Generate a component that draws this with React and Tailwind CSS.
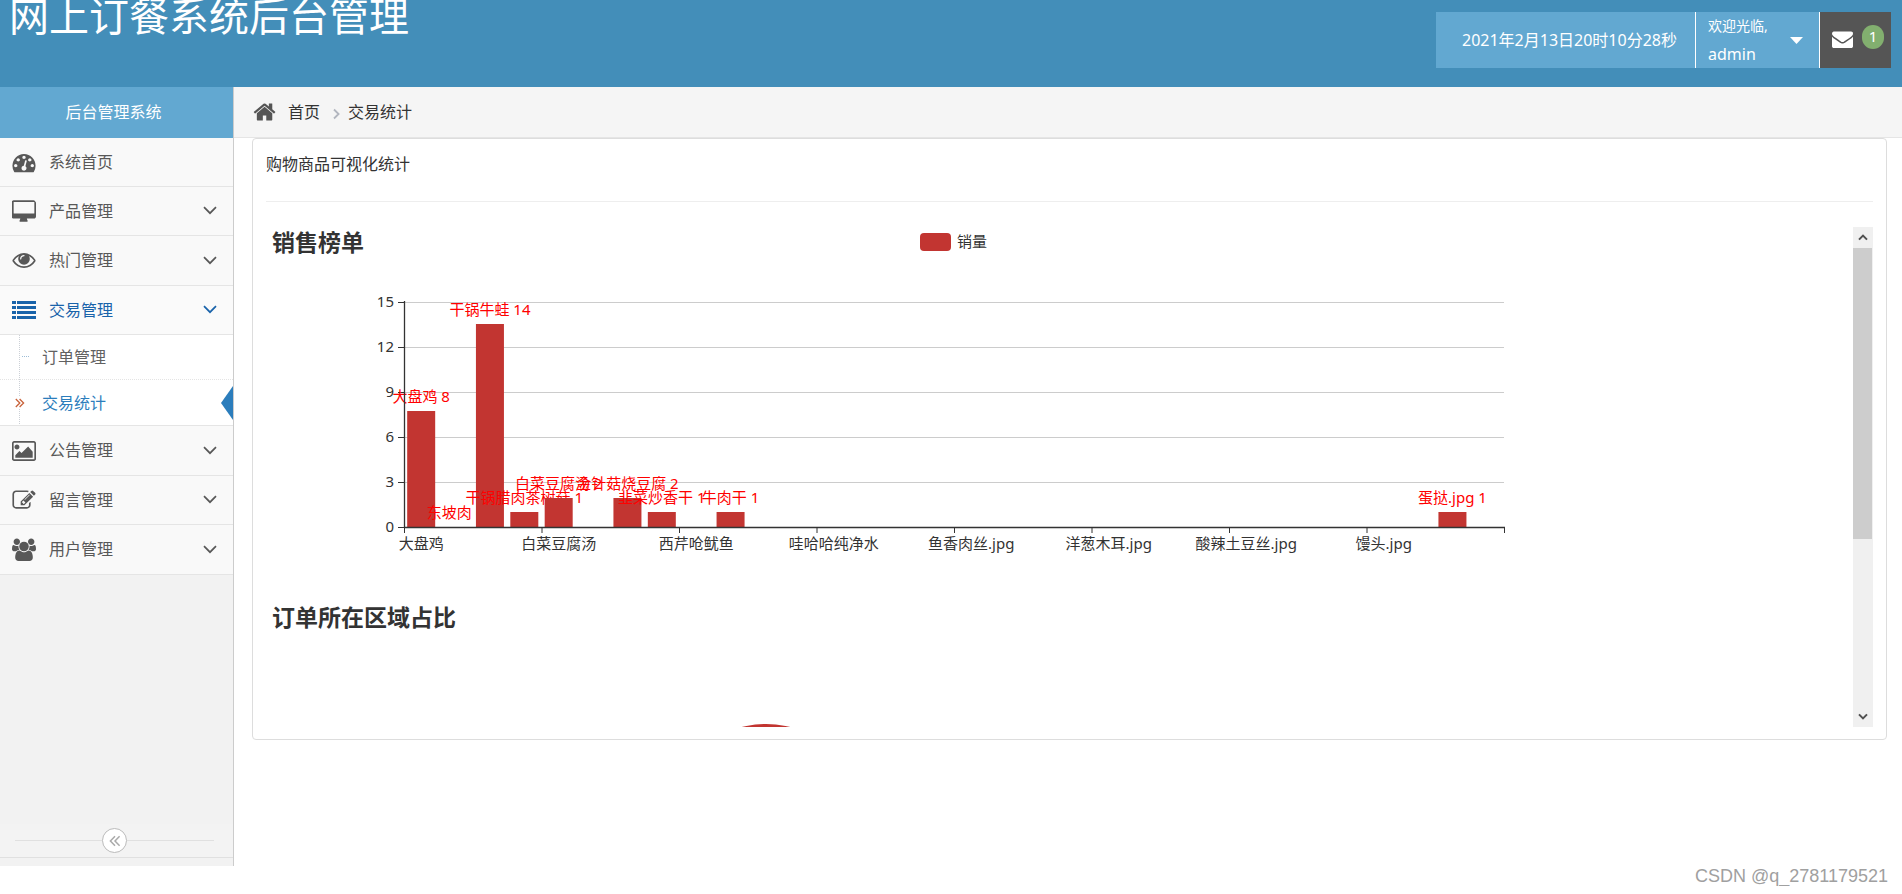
import { useState } from "react";

const ICONS = {
  dashboard: {
    box: "-32 -62 1856 1856",
    d: "M384 1152q0-53-37.5-90.5t-90.5-37.5-90.5 37.5-37.5 90.5 37.5 90.5 90.5 37.5 90.5-37.5 37.5-90.5zm192-448q0-53-37.5-90.5t-90.5-37.5-90.5 37.5-37.5 90.5 37.5 90.5 90.5 37.5 90.5-37.5 37.5-90.5zm428 481l101-382q6-26-7.5-48.5t-38.5-29.5-48 6.5-30 39.5l-101 382q-60 5-107 43.5t-63 98.5q-20 77 20 146t117 89 146-20 89-117q16-60-6-117t-72-91zm660-33q0-53-37.5-90.5t-90.5-37.5-90.5 37.5-37.5 90.5 37.5 90.5 90.5 37.5 90.5-37.5 37.5-90.5zm-640-640q0-53-37.5-90.5t-90.5-37.5-90.5 37.5-37.5 90.5 37.5 90.5 90.5 37.5 90.5-37.5 37.5-90.5zm448 192q0-53-37.5-90.5t-90.5-37.5-90.5 37.5-37.5 90.5 37.5 90.5 90.5 37.5 90.5-37.5 37.5-90.5zm320 448q0 261-141 483-19 29-54 29h-1402q-35 0-54-29-141-221-141-483 0-182 71-348t191-286 286-191 348-71 348 71 286 191 191 286 71 348z",
  },
  desktop: {
    box: "0 -100 1856 1856",
    d: "M1728 992v-832q0-13-9.5-22.5t-22.5-9.5h-1536q-13 0-22.5 9.5t-9.5 22.5v832q0 13 9.5 22.5t22.5 9.5h1536q13 0 22.5-9.5t9.5-22.5zm128-832v1088q0 66-47 113t-113 47h-544q0 37 16 77.5t32 71 16 43.5q0 26-19 45t-45 19h-512q-26 0-45-19t-19-45q0-14 16-44t32-70 16-78h-512q-66 0-113-47t-47-113v-1088q0-66 47-113t113-47h1536q66 0 113 47t47 113z",
  },
  eye: {
    box: "-32 -10 1856 1856",
    d: "M1664 960q-152-236-381-353 61 104 61 225 0 185-131.5 316.5t-316.5 131.5-316.5-131.5-131.5-316.5q0-121 61-225-229 117-381 353 133 205 333.5 326.5t434.5 121.5 434.5-121.5 333.5-326.5zm-720-384q0-20-14-34t-34-14q-125 0-214.5 89.5t-89.5 214.5q0 20 14 34t34 14 34-14 14-34q0-86 61-147t147-61q20 0 34-14t14-34zm848 384q0 34-20 69-140 230-376.5 368.5t-499.5 138.5-499.5-139-376.5-368q-20-35-20-69t20-69q140-229 376.5-368t499.5-139 499.5 139 376.5 368q20 35 20 69z",
  },
  list: {
    box: "0 0 24 24",
    d: "M0 3h4v3H0zM0 8h4v3H0zM0 13h4v3H0zM0 18h4v3H0zM5 3h19v3H5zM5 8h19v3H5zM5 13h19v3H5zM5 18h19v3H5z",
  },
  picture: {
    box: "0 -112 1856 1856",
    d: "M576 576q0 80-56 136t-136 56-136-56-56-136 56-136 136-56 136 56 56 136zm1024 384v448h-1344v-192l320-320 160 160 512-512zm96-704h-1536q-13 0-22.5 9.5t-9.5 22.5v1216q0 13 9.5 22.5t22.5 9.5h1536q13 0 22.5-9.5t9.5-22.5v-1216q0-13-9.5-22.5t-22.5-9.5zm160 32v1216q0 66-47 113t-113 47h-1536q-66 0-113-47t-47-113v-1216q0-66 47-113t113-47h1536q66 0 113 47t47 113z",
  },
  edit: {
    box: "-32 -60 1856 1856",
    d: "M888 1184l116-116-152-152-116 116v56h96v96h56zm440-720q-16-16-33 1l-350 350q-17 17-1 33t33-1l350-350q17-17 1-33zm80 594v190q0 119-84.5 203.5t-203.5 84.5h-832q-119 0-203.5-84.5t-84.5-203.5v-832q0-119 84.5-203.5t203.5-84.5h832q63 0 117 25 15 7 18 23 3 17-9 29l-49 49q-14 14-32 8-23-6-45-6h-832q-66 0-113 47t-47 113v832q0 66 47 113t113 47h832q66 0 113-47t47-113v-126q0-13 9-22l64-64q15-15 35-7t20 29zm-96-738l288 288-672 672h-288v-288zm444 132l-92 92-288-288 92-92q28-28 68-28t68 28l152 152q28 28 28 68t-28 68z",
  },
  users: {
    box: "0 -120 1920 1920",
    d: "M593 896q-162 5-265 128h-134q-82 0-138-40.5t-56-118.5q0-353 124-353 6 0 43.5 21t97.5 42.5 119 21.5q67 0 133-23-5 37-5 66 0 139 81 256zm1071 637q0 120-73 189.5t-194 69.5h-874q-121 0-194-69.5t-73-189.5q0-53 3.5-103.5t14-109 26.5-108.5 43-97.5 62-81 85.5-53.5 111.5-20q10 0 43 21.5t73 48 107 48 135 21.5 135-21.5 107-48 73-48 43-21.5q61 0 111.5 20t85.5 53.5 62 81 43 97.5 26.5 108.5 14 109 3.5 103.5zm-1024-1277q0 106-75 181t-181 75-181-75-75-181 75-181 181-75 181 75 75 181zm704 384q0 159-112.5 271.5t-271.5 112.5-271.5-112.5-112.5-271.5 112.5-271.5 271.5-112.5 271.5 112.5 112.5 271.5zm576 225q0 78-56 118.5t-138 40.5h-134q-103-123-265-128 81-117 81-256 0-29-5-66 66 23 133 23 59 0 119-21.5t97.5-42.5 43.5-21q124 0 124 353zm-128-609q0 106-75 181t-181 75-181-75-75-181 75-181 181-75 181 75 75 181z",
  },
  home: {
    box: "60 0 1664 1792",
    d: "M1472 992v480q0 26-19 45t-45 19h-384v-384h-256v384h-384q-26 0-45-19t-19-45v-480q0-1 .5-3t.5-3l575-474 575 474q1 2 1 6zm223-69l-62 74q-8 9-21 11h-3q-13 0-21-7l-692-577-692 577q-12 8-24 7-13-2-21-11l-62-74q-8-10-7-23.5t11-21.5l719-599q32-26 76-26t76 26l244 204v-195q0-14 9-23t23-9h192q14 0 23 9t9 23v408l219 182q10 8 11 21.5t-7 23.5z",
  },
  envelope: {
    box: "0 124 1792 1792",
    d: "M1792 710v794q0 66-47 113t-113 47h-1472q-66 0-113-47t-47-113v-794q44 49 101 87 362 246 497 345 57 42 92.5 65.5t94.5 48 110 24.5h2q51 0 110-24.5t94.5-48 92.5-65.5q170-123 498-345 57-39 100-87zm0-294q0 79-49 151t-122 123q-376 261-468 325-10 7-42.5 31t-54 38.5-52 32.5-57.5 27-50 9h-2q-23 0-50-9t-57.5-27-52-32.5-54-38.5-42.5-31q-91-64-262-182.5t-205-142.500q-62-42-117-115.5t-55-136.5q0-78 41.5-130t118.5-52h1472q65 0 112.5 47t47.500 113z",
  },
};

function Icon({ name, className }) {
  const icon = ICONS[name];
  return (
    <svg viewBox={icon.box} className={className} fill="currentColor" aria-hidden="true">
      <path d={icon.d} />
    </svg>
  );
}

function AngleDown() {
  return (
    <svg viewBox="0 0 14 9" className="h-[9px] w-[14px]" fill="none" stroke="currentColor" strokeWidth="1.7" aria-hidden="true">
      <path d="M1 1.2 7 7.2 13 1.2" />
    </svg>
  );
}

const MENU = [
  { label: "系统首页", icon: "dashboard" },
  { label: "产品管理", icon: "desktop", expandable: true },
  { label: "热门管理", icon: "eye", expandable: true },
  { label: "交易管理", icon: "list", expandable: true, children: ["订单管理", "交易统计"] },
  { label: "公告管理", icon: "picture", expandable: true },
  { label: "留言管理", icon: "edit", expandable: true },
  { label: "用户管理", icon: "users", expandable: true },
];

function SubMenu({ items, current, onSelect }) {
  return (
    <ul className="relative bg-white">
      <li aria-hidden="true" className="absolute bottom-0 left-[19px] top-0 border-l border-dotted border-[#ccd0d6]" />
      {items.map((item) => {
        const active = item === current;
        return (
          <li key={item} className="group relative h-[45px] last:h-[46px] last:border-b last:border-[#e5e5e5]">
            <button
              type="button"
              onClick={() => onSelect(item)}
              className={`flex h-full w-full items-center border-b border-dotted border-[#e4e4e4] pl-[42px] text-base group-last:border-b-0 ${
                active ? "text-[#2b7dbc]" : "text-[#616161]"
              }`}
            >
              {item}
            </button>
            {active ? (
              <>
                <svg viewBox="0 0 10 12" className="absolute left-[15px] top-[17px] h-3 w-[10px] bg-white" fill="none" stroke="#c86139" strokeWidth="1.3" aria-hidden="true">
                  <path d="M.8 2 4.8 6 .8 10M4.6 2 8.6 6 4.6 10" />
                </svg>
                <svg viewBox="0 0 12 34" className="absolute right-0 top-[6px] h-[34px] w-3" fill="#2b7dbc" aria-hidden="true">
                  <path d="M12 0v34L0 17z" />
                </svg>
              </>
            ) : (
              <span aria-hidden="true" className="absolute left-[22px] top-[21px] w-[7px] border-t border-dotted border-[#9dbdd6]" />
            )}
          </li>
        );
      })}
    </ul>
  );
}

function Sidebar() {
  const [current, setCurrent] = useState("交易统计");
  return (
    <aside className="flex w-[234px] shrink-0 flex-col border-r border-[#cccccc] bg-[#f2f2f2]">
      <div className="flex h-[51px] items-center justify-center bg-[#62a8d1] pb-px pr-[6px] text-base text-white">后台管理系统</div>
      <nav>
        <ul>
          {MENU.map((item) => (
            <li key={item.label}>
              <button
                type="button"
                className={`flex w-full items-center border-b border-[#e5e5e5] pb-px pl-3 pr-[16px] text-base ${
                  item.icon === "eye" || item.icon === "picture" || item.icon === "users" ? "h-[50px]" : "h-[49px]"
                } ${item.children ? "bg-[#fafafa] text-[#1963aa]" : "bg-[#f9f9f9] text-[#585858]"}`}
              >
                <Icon name={item.icon} className="mr-[13px] size-6" />
                <span className="flex-1 text-left">{item.label}</span>
                {item.expandable && <AngleDown />}
              </button>
              {item.children && <SubMenu items={item.children} current={current} onSelect={setCurrent} />}
            </li>
          ))}
        </ul>
      </nav>
      <div className="mt-auto mb-2 flex h-[34px] items-center border-b border-[#e0e0e0] bg-[#f3f3f3] pl-[15px] pr-[19px]">
        <span className="h-px flex-1 bg-[#e0e0e0]" />
        <button
          type="button"
          aria-label="收起菜单"
          className="flex size-[25px] items-center justify-center rounded-full border border-[#bbbbbb] bg-white text-[#aaaaaa]"
        >
          <svg viewBox="0 0 12 12" className="size-3" fill="none" stroke="currentColor" strokeWidth="1.5" aria-hidden="true">
            <path d="M6 1.2 1.4 6 6 10.8M10.6 1.2 6 6 10.6 10.8" />
          </svg>
        </button>
        <span className="h-px flex-1 bg-[#e0e0e0]" />
      </div>
    </aside>
  );
}

const LEFT = 138;
const BASE = 300;
const STEP = 15;
const SLOT = 34.375;
const X_LABELS = ["大盘鸡", "白菜豆腐汤", "西芹呛鱿鱼", "哇哈哈纯净水", "鱼香肉丝.jpg", "洋葱木耳.jpg", "酸辣土豆丝.jpg", "馒头.jpg"];
const SALES = [
  { slot: 0, name: "大盘鸡", value: 8, height: 116 },
  { slot: 1, name: "东坡肉", value: 0, height: 0 },
  { slot: 2, name: "干锅牛蛙", value: 14, height: 203 },
  { slot: 3, name: "干锅腊肉茶树菇", value: 1, height: 15 },
  { slot: 4, name: "白菜豆腐汤", value: 2, height: 29 },
  { slot: 6, name: "金针菇烧豆腐", value: 2, height: 29 },
  { slot: 7, name: "韭菜炒香干", value: 1, height: 15 },
  { slot: 9, name: "牛肉干", value: 1, height: 15 },
  { slot: 30, name: "蛋挞.jpg", value: 1, height: 15 },
];

function SalesChart() {
  return (
    <svg width="1375" height="375" className="block shrink-0 text-[15px]" fill="#333333" role="img" aria-label="销售榜单">
      <text x="6" y="24" fontSize="23" fontWeight="bold">
        销售榜单
      </text>
      <rect x="654" y="6" width="31" height="18" rx="4" fill="#c23531" />
      <text x="691" y="20">
        销量
      </text>
      {[0, 3, 6, 9, 12, 15].map((tick) => {
        const y = BASE - tick * STEP;
        return (
          <g key={tick}>
            {tick > 0 && <line x1={LEFT} x2={LEFT + 1100} y1={y + 0.5} y2={y + 0.5} stroke="#cccccc" />}
            <line x1={LEFT - 6} x2={LEFT} y1={y + 0.5} y2={y + 0.5} stroke="#333333" />
            <text x={LEFT - 10} y={y + 5} textAnchor="end">
              {tick}
            </text>
          </g>
        );
      })}
      {SALES.map(({ slot, name, value, height }) => {
        const center = LEFT + SLOT * (slot + 0.5);
        return (
          <g key={name}>
            <rect x={center - 14} y={BASE - height} width="28" height={height} fill="#c23531" />
            <text x={center} y={BASE - height - 9} textAnchor="middle" fill="#ff0000">
              {name} {value}
            </text>
          </g>
        );
      })}
      <line x1={LEFT + 0.5} x2={LEFT + 0.5} y1={BASE - 226} y2={BASE} stroke="#333333" strokeWidth="1.3" />
      <line x1={LEFT} x2={LEFT + 1101} y1={BASE + 0.5} y2={BASE + 0.5} stroke="#333333" strokeWidth="1.3" />
      {X_LABELS.map((label, i) => (
        <text key={label} x={LEFT + SLOT * (i * 4 + 0.5)} y={BASE + 22} textAnchor="middle">
          {label}
        </text>
      ))}
      {[0, 1, 2, 3, 4, 5, 6, 7, 8].map((i) => (
        <line key={i} x1={LEFT + 0.5 + i * 137.5} x2={LEFT + 0.5 + i * 137.5} y1={BASE} y2={BASE + 6} stroke="#333333" />
      ))}
    </svg>
  );
}

function RegionChart() {
  return (
    <svg width="1375" height="412" className="block shrink-0" role="img" aria-label="订单所在区域占比">
      <text x="6" y="24" fontSize="23" fontWeight="bold" fill="#333333">
        订单所在区域占比
      </text>
      <circle cx="500" cy="222" r="100" fill="#c23531" />
    </svg>
  );
}

function ScrollTrack() {
  return (
    <div className="flex w-5 shrink-0 flex-col bg-[#f0f0f0] text-[#505050]">
      <button type="button" aria-label="向上滚动" className="flex h-[21px] items-center justify-center">
        <svg viewBox="0 0 10 7" className="h-[7px] w-[10px]" fill="none" stroke="currentColor" strokeWidth="2" aria-hidden="true">
          <path d="M1 5.6 5 1.6 9 5.6" />
        </svg>
      </button>
      <div className="mr-px h-[291px] bg-[#cdcdcd]" />
      <button type="button" aria-label="向下滚动" className="mt-auto flex h-[21px] items-center justify-center">
        <svg viewBox="0 0 10 7" className="h-[7px] w-[10px]" fill="none" stroke="currentColor" strokeWidth="2" aria-hidden="true">
          <path d="M1 1.4 5 5.4 9 1.4" />
        </svg>
      </button>
    </div>
  );
}

function TopBar() {
  return (
    <header className="flex h-[87px] items-start justify-between bg-[#438eb9] text-white">
      <h1 className="pl-[9px] text-[40px] leading-8">网上订餐系统后台管理</h1>
      <div className="mr-[11px] mt-3 flex h-14">
        <div className="flex w-[259px] items-center justify-center bg-[#62a8d1] pl-2 text-base">2021年2月13日20时10分28秒</div>
        <button type="button" className="flex w-[124px] items-center justify-between border-l border-white bg-[#62a8d1] pl-3 pr-4 text-left">
          <span className="flex flex-col">
            <span className="text-sm leading-7">欢迎光临,</span>
            <span className="text-base leading-7">admin</span>
          </span>
          <svg viewBox="0 0 13 7" className="h-[7px] w-[13px]" fill="currentColor" aria-hidden="true">
            <path d="M0 0h13L6.5 7z" />
          </svg>
        </button>
        <button type="button" className="flex w-[72px] items-center border-l border-white bg-[#555555] pl-3" aria-label="消息">
          <Icon name="envelope" className="size-[21px]" />
          <span className="mb-1.5 ml-[9px] h-6 w-[22px] rounded-full bg-[#82af6f] text-center text-[15px] leading-[22px]">1</span>
        </button>
      </div>
    </header>
  );
}

function Breadcrumb() {
  return (
    <nav className="flex h-[51px] items-center border-b border-[#e5e5e5] bg-[#f5f5f5] pl-[19px] text-base text-[#333333]" aria-label="面包屑">
      <Icon name="home" className="mr-3 h-6 w-[23px] text-[#555555]" />
      <a href="#home">首页</a>
      <svg viewBox="0 0 7 12" className="ml-[13px] mr-2 mt-1 h-3 w-[7px]" fill="none" stroke="#b2b6bf" strokeWidth="1.8" aria-hidden="true">
        <path d="M1 1.5 5.6 6 1 10.5" />
      </svg>
      <span>交易统计</span>
    </nav>
  );
}

export default function App() {
  return (
    <div className="bg-white font-['Noto_Sans','Noto_Sans_CJK_SC',sans-serif]">
      <TopBar />
      <div className="flex min-h-[779px]">
        <Sidebar />
        <main className="min-w-0 flex-1">
          <Breadcrumb />
          <section className="ml-[18px] mr-[15px] rounded border border-[#dddddd] px-[13px] pb-3">
            <h2 className="flex h-[63px] items-center border-b border-[#eeeeee] pb-3 text-base text-[#333333]">购物商品可视化统计</h2>
            <div className="mt-[25px] flex h-[500px]">
              <div className="min-w-0 flex-1 overflow-hidden">
                <SalesChart />
                <RegionChart />
              </div>
              <ScrollTrack />
            </div>
          </section>
        </main>
      </div>
      <footer className="pr-[14px] text-right font-['Liberation_Sans',sans-serif] text-lg leading-5 text-[#a0a0a0]">
        CSDN @q_2781179521
      </footer>
    </div>
  );
}
